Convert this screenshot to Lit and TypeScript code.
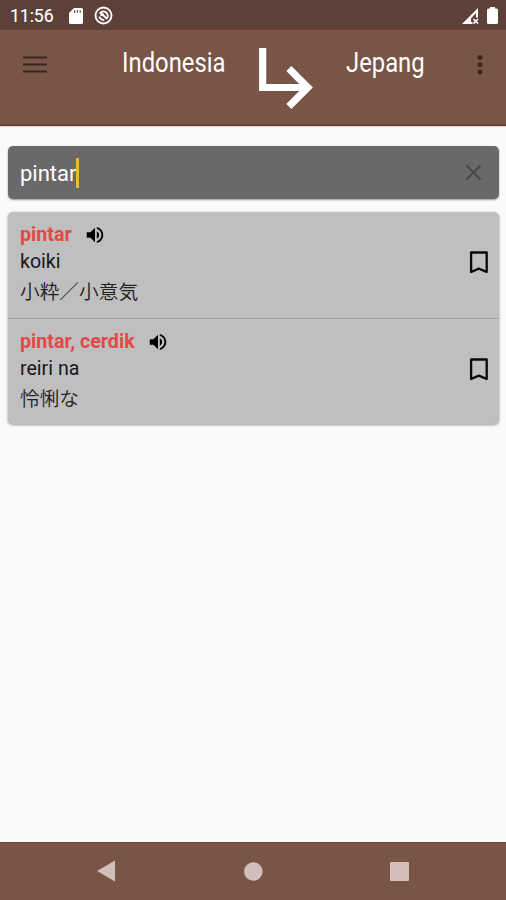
import { LitElement, html, css } from "lit";
import { customElement, property } from "lit/decorators.js";

interface Entry {
  word: string;
  reading: string;
  script: string;
}

const entries: Entry[] = [
  { word: "pintar", reading: "koiki", script: "小粋／小意気" },
  { word: "pintar, cerdik", reading: "reiri na", script: "怜悧な" },
];

@customElement("status-bar")
class StatusBar extends LitElement {
  static styles = css`
    :host { display: flex; align-items: center; height: 30px; background: #5d4037; color: #fff;
      box-sizing: border-box; padding: 1px 8px 0 10px; }
    .time { font-size: 17.700px; line-height: 28px; width: 59px; letter-spacing: -0.1px; -webkit-text-stroke: 0.1px #fff; }
    svg { display: block; fill: #fff; }
    .target { margin-left: 11px; }
    .signal { margin-left: auto; }
    .battery { margin-left: 8px; }
  `;
  render() {
    return html`
      <span class="time">11:56</span>
      <svg width="14" height="16" viewBox="0 0 14 16">
        <path fill-rule="evenodd" d="M5 0h7.500q1.500 0 1.500 1.500v13q0 1.500-1.500 1.500h-11Q0 16 0 14.500V5zM5 2.300v2.500h1.200v-2.500zM7.800 2.300v2.500h1.200v-2.500zM10.600 2.300v2.500h1.200v-2.500z" />
      </svg>
      <svg class="target" width="19" height="19" viewBox="0 0 19 19">
        <circle cx="9.500" cy="9.500" r="8" fill="none" stroke="#fff" stroke-width="1.900" />
        <path d="M5.700 7.500a4.400 4.400 0 1 1 7.400 4.800M5.300 10.500a4.400 4.400 0 0 0 5 3.300M8.500 8.500l4.700 4.500" fill="none" stroke="#fff" stroke-width="1.800" />
        <circle cx="8" cy="8.500" r="1.800" />
      </svg>
      <svg class="signal" width="17" height="16" viewBox="0 0 17 16">
        <path fill-rule="evenodd" d="M16 0v9.500h-2V5L9 10.500V14h1.500v2H0z" />
        <path d="M11.500 11l4.500 4.500M16 11l-4.500 4.500" stroke="#fff" stroke-width="1.700" />
      </svg>
      <svg class="battery" width="11" height="17" viewBox="0 0 11 17">
        <path d="M3 0h5v1.500h1.500Q11 1.500 11 3v12.500q0 1.500-1.500 1.500h-8Q0 17 0 15.500V3q0-1.500 1.500-1.500H3z" />
      </svg>
    `;
  }
}

@customElement("language-header")
class LanguageHeader extends LitElement {
  static styles = css`
    :host { display: grid; grid-template-columns: 122px 137px 87px 130px 1fr; height: 95.500px; background: #795548;
      box-sizing: border-box; border-bottom: 2px solid #6d3f30; align-items: start; box-shadow: 0 1px 1px #0002; }
    svg { display: block; }
    .menu { margin: 26px 0 0 23px; }
    .arrow { margin-top: 18px; }
    .more { margin-top: 25px; }
    .lang { color: #fff; font-size: 27px; line-height: 32px; margin-top: 17px; white-space: nowrap;
      transform-origin: 0 0; transform: scaleX(0.882); justify-self: start; }
  `;
  render() {
    return html`
      <svg class="menu" width="24" height="17" viewBox="0 0 24 17">
        <path d="M0 1.500h24M0 8.500h24M0 15.500h24" stroke="#38271f" stroke-width="2" />
      </svg>
      <span class="lang">Indonesia</span>
      <svg class="arrow" width="54" height="61" viewBox="4 4 15 17">
        <path fill="#fff" d="M19 15l-6 6-1.420-1.420L15.170 16H4V4h2v10h9.170l-3.590-3.580L13 9z" />
      </svg>
      <span class="lang">Jepang</span>
      <svg class="more" width="8" height="20" viewBox="0 0 8 20" fill="#38271f">
        <circle cx="4" cy="2.500" r="2.500" /><circle cx="4" cy="9.700" r="2.500" /><circle cx="4" cy="17" r="2.500" />
      </svg>
    `;
  }
}

@customElement("search-field")
class SearchField extends LitElement {
  static styles = css`
    :host { display: flex; align-items: center; height: 53px; box-sizing: border-box; padding: 0 17px 0 12px;
      background: #696969; border-radius: 5px; box-shadow: 0 1px 2px #0006; color: #fff; }
    .query { font-size: 22px; line-height: 30px; padding-top: 2px; }
    .caret { width: 2.500px; height: 30px; background: #f0b92c; }
    .clear { margin-left: auto; display: block; }
  `;
  render() {
    return html`
      <span class="query">pintar</span><span class="caret"></span>
      <svg class="clear" width="17" height="17" viewBox="0 0 17 17">
        <path d="M1.500 1.500l14 14M15.500 1.500l-14 14" stroke="#464646" stroke-width="1.900" />
      </svg>
    `;
  }
}

@customElement("result-row")
class ResultRow extends LitElement {
  @property({ attribute: false }) entry!: Entry;
  static styles = css`
    :host { display: flex; align-items: flex-start; height: 106px; box-sizing: border-box; padding: 9px 10.500px 0 12px; }
    .text { flex: 1; }
    .head { display: flex; align-items: center; height: 28px; }
    .word { color: #e24a47; font-weight: 700; font-size: 19.700px; line-height: 28px; }
    .reading { color: #181818; font-size: 19.600px; line-height: 26px; }
    .script { color: #222; font-size: 19.700px; line-height: 31px; font-family: "Noto Sans CJK JP", sans-serif; font-weight: 350; }
    .speaker { margin: 0 0 0 12.500px; }
    .bookmark { margin-top: 30px; }
    svg { display: block; }
  `;
  render() {
    return html`
      <div class="text">
        <div class="head">
          <span class="word">${this.entry.word}</span>
          <svg class="speaker" width="22" height="22" viewBox="0 0 24 24">
            <path d="M3 9v6h4l5 5V4L7 9H3zm13.500 3c0-1.770-1.020-3.290-2.500-4.030v8.050c1.480-.73 2.500-2.250 2.500-4.020zM14 3.230v2.060c2.890.86 5 3.540 5 6.710s-2.110 5.850-5 6.710v2.060c4.010-.91 7-4.490 7-8.770s-2.990-7.860-7-8.770z" />
          </svg>
        </div>
        <div class="reading">${this.entry.reading}</div>
        <div class="script">${this.entry.script}</div>
      </div>
      <svg class="bookmark" width="20" height="23" viewBox="0 0 20 23">
        <path d="M2.100 1.500h15.600V21l-7.800-3.400L2.100 21z" fill="none" stroke="#080808" stroke-width="2.300" stroke-linejoin="round" />
      </svg>
    `;
  }
}

@customElement("navigation-bar")
class NavigationBar extends LitElement {
  static styles = css`
    :host { display: grid; grid-template-columns: 96.500px 147.500px 145.500px 1fr; height: 58.500px; background: #795548;
      align-items: center; border-top: 1px solid #6b4638; box-sizing: border-box; }
    svg { display: block; grid-row: 1; fill: #d2bfb9; }
    .back { grid-column: 2; }
    .home { grid-column: 3; }
    .recent { grid-column: 4; }
  `;
  render() {
    return html`
      <svg class="back" width="18" height="22" viewBox="0 0 18 22"><path d="M18 .5v21L0 11z" /></svg>
      <svg class="home" width="19" height="19" viewBox="0 0 19 19"><circle cx="9.300" cy="9.500" r="9.300" /></svg>
      <svg class="recent" width="19" height="19" viewBox="0 0 19 19"><rect width="19" height="19" rx="1" /></svg>
    `;
  }
}

@customElement("app-root")
class AppRoot extends LitElement {
  static styles = css`
    :host { display: flex; flex-direction: column; height: 900px; background: #fafafa; font-family: Roboto, sans-serif; overflow: hidden; }
    main { flex: 1; display: flex; flex-direction: column; gap: 13px; padding: 20.500px 7px 0 8px; }
    .results { background: #bfbfbf; border-radius: 5px; box-shadow: 0 1px 3px #0006; }
    result-row + result-row { border-top: 1px solid #a4a4a4; }
  `;
  render() {
    return html`
      <status-bar></status-bar>
      <language-header></language-header>
      <main>
        <search-field></search-field>
        <div class="results">${entries.map((entry) => html`<result-row .entry=${entry}></result-row>`)}</div>
      </main>
      <navigation-bar></navigation-bar>
    `;
  }
}
